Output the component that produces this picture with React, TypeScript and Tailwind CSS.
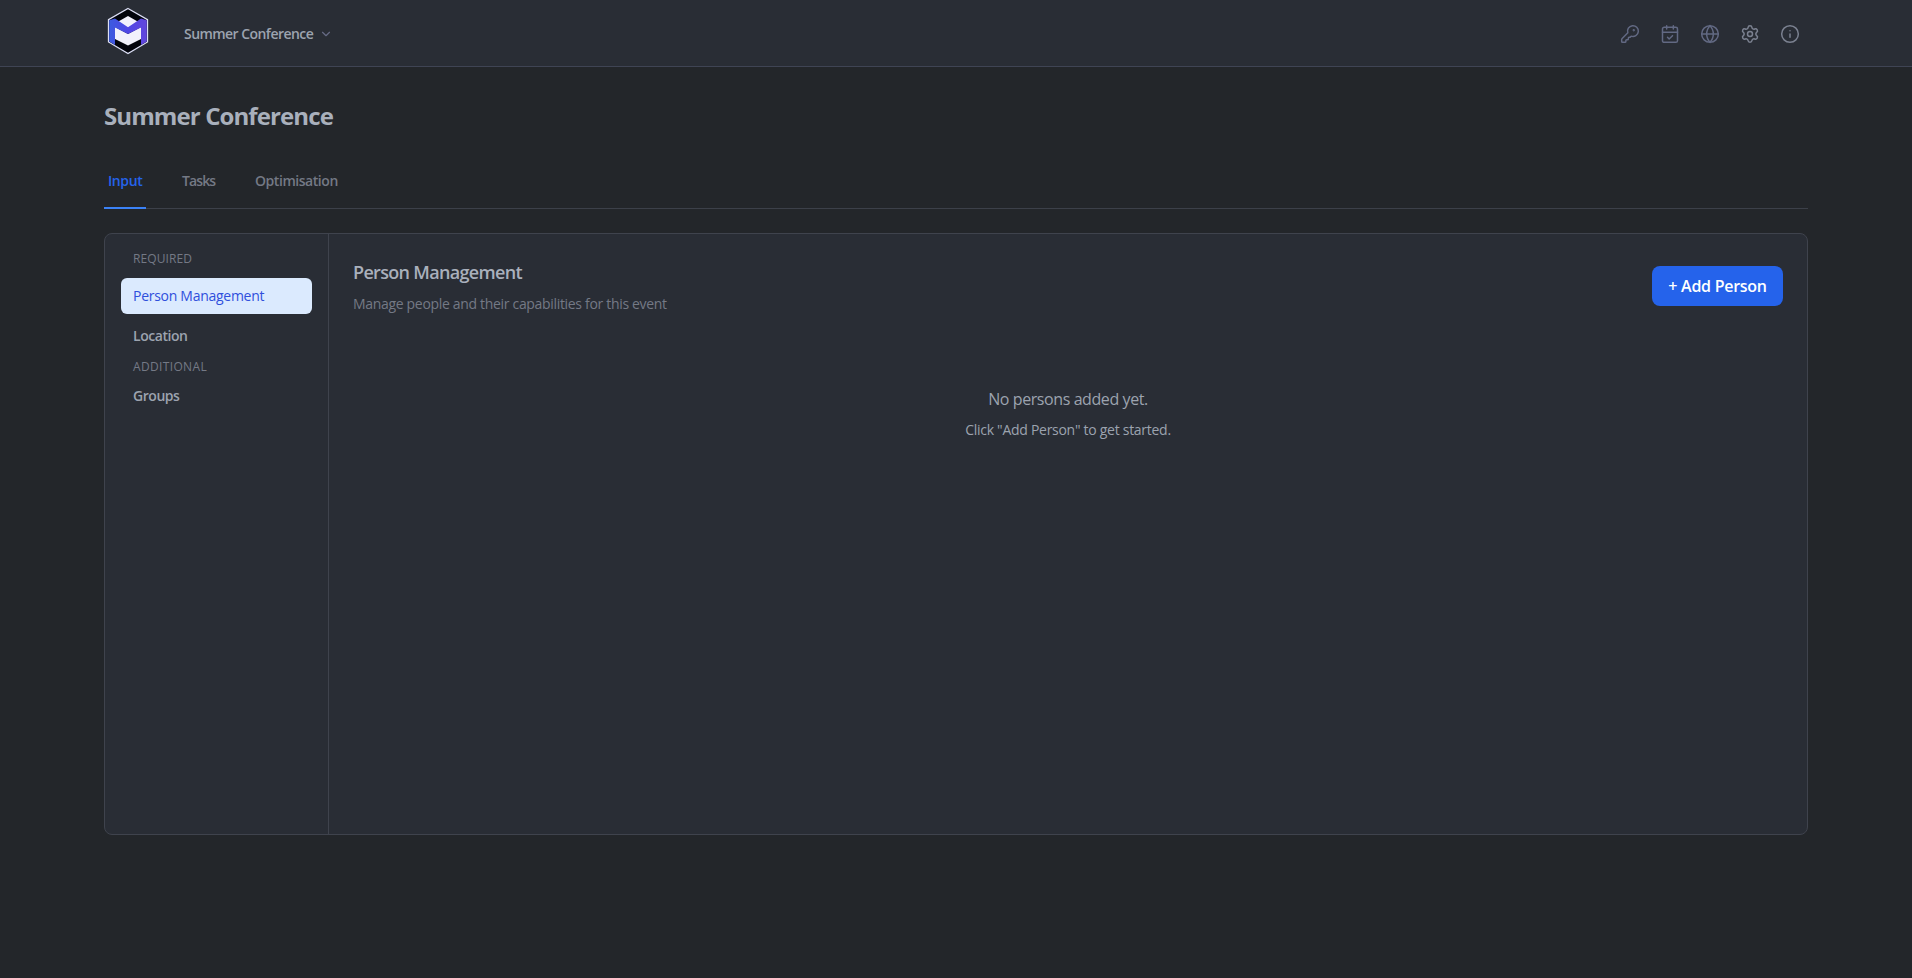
import React, { useState } from 'react';
import { ChevronDown, Globe, Info, KeyRound, Settings } from 'lucide-react';

const tabs = [
  { name: 'Input', className: 'w-[42px] tracking-[-0.4px]' },
  { name: 'Tasks', className: 'w-[41px] tracking-[-0.9px]' },
  { name: 'Optimisation', className: 'w-[91px] tracking-[-0.45px]' },
];

const sections = [
  { title: 'Required', items: ['Person Management', 'Location'], className: 'mb-3 tracking-[0.1px]' },
  { title: 'Additional', items: ['Groups'], className: 'mb-1 tracking-[0.35px]' },
];

const Logo: React.FC = () => (
  <svg width="42" height="48" viewBox="0 0 42 48" fill="none">
    <defs>
      <linearGradient id="logo-m" x1="0" y1="0" x2="1" y2="0">
        <stop offset="0" stopColor="#3b5bdf" />
        <stop offset="0.5" stopColor="#4f46e5" />
        <stop offset="1" stopColor="#6246dc" />
      </linearGradient>
    </defs>
    <path d="M21 1.5 40.5 12.7V35L21 46.5 1.5 35V12.7Z" fill="#02040c" stroke="#dcdff5" strokeWidth="1.3" />
    <path d="M21 9 31.5 15 21 21 10.5 15Z" fill="#f1f1fc" />
    <path d="M8 20 21 27 34 20V32L21 38.5 8 32Z" fill="#f1f1fc" />
    <path d="M2.2 13.3 8 11.5 21 20.3 34 11.5 39.8 13.3V34.6L34 38V20.5L21 27 8 20.5V38L2.2 34.6Z" fill="url(#logo-m)" />
  </svg>
);

const CalendarCheckSmall: React.FC = () => (
  <svg className="size-5" viewBox="0 0 24 24" fill="none" stroke="currentColor" strokeWidth="1.8" strokeLinecap="round" strokeLinejoin="round">
    <path d="M8 2v4M16 2v4M3 10h18" />
    <rect width="18" height="18" x="3" y="4" rx="2" />
    <path d="m9 16 2 2 4-4" />
  </svg>
);

const Header: React.FC = () => (
  <header className="h-[67px] bg-[#292d35] border-b border-[#3f4454] shrink-0">
    <div className="w-[1704px] mx-auto h-full flex items-center justify-between">
      <div className="flex items-center">
        <div className="ml-[3px] -mt-1"><Logo /></div>
        <button className="ml-[35px] mt-0.5 flex items-center gap-[5px] text-sm font-semibold text-[#9ca3af]">
          <span className="w-[130px] text-left whitespace-nowrap tracking-[-0.55px]">Summer Conference</span>
          <ChevronDown className="size-3.5 text-[#666b85]" strokeWidth={2} />
        </button>
      </div>
      <div className="flex items-center gap-5 mr-2 mt-0.5 text-[#626983]">
        <KeyRound className="size-5" strokeWidth={1.8} />
        <CalendarCheckSmall />
        <Globe className="size-5" strokeWidth={1.8} />
        <Settings className="size-5 text-[#7b8190]" strokeWidth={1.8} />
        <Info className="size-5 text-[#7b8190]" strokeWidth={1.8} />
      </div>
    </div>
  </header>
);

const App: React.FC = () => {
  const [activeTab, setActiveTab] = useState('Input');
  const [activeSection, setActiveSection] = useState('Person Management');

  return (
    <div className="h-screen overflow-hidden flex flex-col bg-[#23262a] font-['Segoe_UI','Open_Sans',sans-serif]">
      <Header />
      <main className="w-[1704px] mx-auto pt-8">
        <h1 className="text-2xl leading-[34px] font-bold text-[#a9b0bc] tracking-[-0.9px]">Summer Conference</h1>

        <nav className="mt-[18px] h-[58px] flex gap-8 border-b border-[#3c4049]">
          {tabs.map((tab) => (
            <button key={tab.name} onClick={() => setActiveTab(tab.name)}
              className={`${tab.className} h-[58px] px-1 pt-1 border-b-2 text-left text-sm font-semibold whitespace-nowrap ${
                activeTab === tab.name
                  ? 'border-[#3b82f6] text-[#2563eb]'
                  : 'border-transparent text-[#747985]'
              }`}>
              {tab.name}
            </button>
          ))}
        </nav>

        <div className="mt-6 h-[602px] flex bg-[#292d35] border border-[#3f434d] rounded-lg">
          <aside className="w-56 p-4 border-r border-[#3f434d]">
            {sections.map((section) => (
              <div key={section.title} className="mb-1">
                <h3 className={`${section.className} h-4 px-3 text-xs leading-[18px] font-medium uppercase text-[#747985]`}>{section.title}</h3>
                <div className="flex flex-col gap-1">
                  {section.items.map((item) => (
                    <button key={item} onClick={() => setActiveSection(item)}
                      className={`h-9 px-3 rounded-md text-left text-sm whitespace-nowrap ${
                        activeSection === item
                          ? 'bg-[#dbeafe] text-[#2f4fdc] font-medium tracking-[-0.28px]'
                          : 'text-[#9ca3af] font-semibold tracking-[-0.45px]'
                      }`}>
                      {item}
                    </button>
                  ))}
                </div>
              </div>
            ))}
          </aside>

          <section className="flex-1 p-6">
            <div className="flex items-center justify-between">
              <div>
                <h2 className="text-lg leading-7 font-semibold text-[#a9b0bc] tracking-[-0.68px]">Person Management</h2>
                <p className="mt-2 text-sm text-[#747985] tracking-[-0.32px]">Manage people and their capabilities for this event</p>
              </div>
              <button className="w-[131px] h-10 rounded-lg bg-[#2563eb] text-white text-base font-semibold whitespace-nowrap tracking-[-0.28px]">
                + Add Person
              </button>
            </div>
            <div className="mt-[73px] text-center text-[#9ca3af]">
              <p className="text-base tracking-[-0.41px]">No persons added yet.</p>
              <p className="mt-[9px] text-sm tracking-[-0.28px]">Click "Add Person" to get started.</p>
            </div>
          </section>
        </div>
      </main>
    </div>
  );
};

export default App;
